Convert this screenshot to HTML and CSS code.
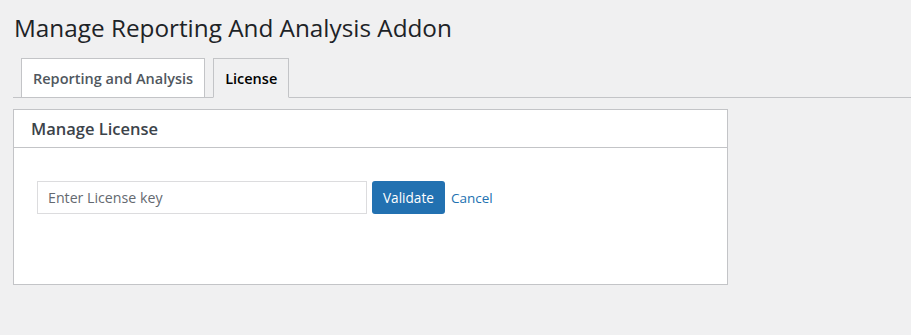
FILE: index.html
```html
<!DOCTYPE html>
<html lang="en">
<head>
  <meta charset="UTF-8">
  <title>Manage Reporting And Analysis Addon</title>
  <link rel="stylesheet" href="styles.css">
</head>
<body>
  <div class="wrap">
    <h1 class="pageTitle">Manage Reporting And Analysis Addon</h1>

    <!-- tabs -->
    <div class="navTabs">
      <a class="navTab" href="#">Reporting and Analysis</a>
      <a class="navTab navTabActive" href="#">License</a>
    </div>

    <!-- license box -->
    <div class="licenseBox">
      <div class="boxHeader">Manage License</div>
      <div class="boxBody">
        <form class="licenseForm">
          <input type="text" class="licenseInput" placeholder="Enter License key">
          <button type="button" class="btnPrimary">Validate</button>
          <a class="cancelLink" href="#">Cancel</a>
        </form>
      </div>
    </div>
  </div>
</body>
</html>
```

FILE: styles.css
```css
/* page */
body {
  margin: 0;
  background-color: #f0f0f1;
  font-family: 'Open Sans', 'Noto Sans', Arial, sans-serif;
  color: #1d2327;
  font-size: 14px;
}
.wrap {
  padding: 0 0 0 13px;
}
.pageTitle {
  margin: 0;
  padding: 12px 0 0 1px;
  font-size: 24.3px;
  font-weight: 400;
  line-height: 32px;
  color: #1d2327;
}

/* tabs */
.navTabs {
  display: flex;
  gap: 8px;
  margin-top: 14px;
  padding-left: 8px;
  border-bottom: 1px solid #c3c4c7;
}
.navTab {
  display: block;
  margin-bottom: -1px;
  padding: 0 11px;
  height: 38px;
  line-height: 39px;
  border: 1px solid #c3c4c7;
  background-color: #fff;
  color: #50575e;
  font-size: 14.5px;
  font-weight: 600;
  text-decoration: none;
}
.navTabActive {
  background-color: #f0f0f1;
  border-bottom-color: #f0f0f1;
  color: #000;
}

/* box */
.licenseBox {
  width: 713px;
  margin-top: 11px;
  background-color: #fff;
  border: 1px solid #c3c4c7;
}
.boxHeader {
  height: 37px;
  line-height: 38px;
  padding-left: 17px;
  border-bottom: 1px solid #c3c4c7;
  font-size: 16.5px;
  font-weight: 600;
  color: #3c434a;
}
.boxBody {
  padding: 33px 23px 70px;
}
.licenseForm {
  display: flex;
  align-items: center;
}
.licenseInput {
  box-sizing: border-box;
  width: 330px;
  height: 33px;
  margin: 0;
  padding: 0 10px;
  border: 1px solid #dcdcde;
  font-family: inherit;
  font-size: 14.2px;
  color: #2c3338;
}
.licenseInput::placeholder {
  color: #646970;
}
.btnPrimary {
  box-sizing: border-box;
  height: 33px;
  margin-left: 5px;
  padding: 0 11px;
  border: none;
  border-radius: 3px;
  background-color: #2271b1;
  color: #fff;
  font-family: inherit;
  font-size: 13.6px;
  cursor: pointer;
}
.cancelLink {
  margin-left: 6px;
  color: #2271b1;
  font-size: 13.5px;
  text-decoration: none;
}
```
